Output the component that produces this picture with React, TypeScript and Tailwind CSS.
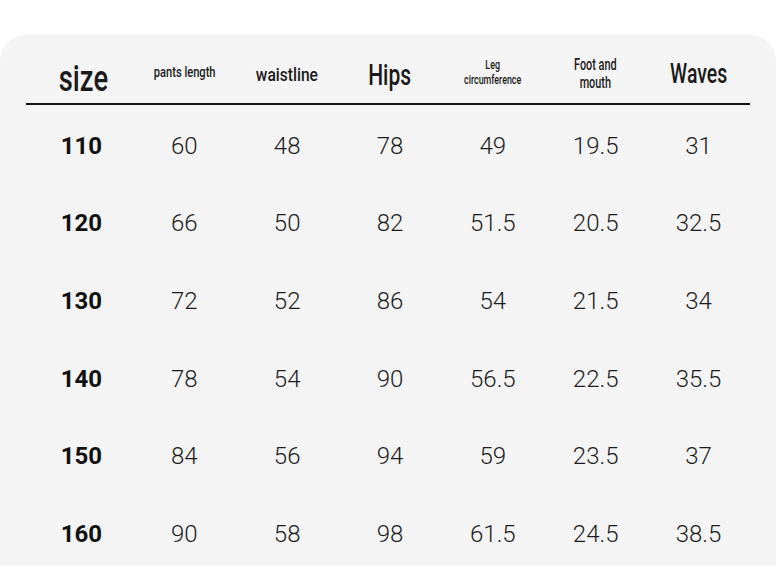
import React from "react";

const rows = [
  ["110", "60", "48", "78", "49", "19.5", "31"],
  ["120", "66", "50", "82", "51.5", "20.5", "32.5"],
  ["130", "72", "52", "86", "54", "21.5", "34"],
  ["140", "78", "54", "90", "56.5", "22.5", "35.5"],
  ["150", "84", "56", "94", "59", "23.5", "37"],
  ["160", "90", "58", "98", "61.5", "24.5", "38.5"],
];

const font = { fontFamily: "Roboto, 'Liberation Sans', sans-serif" };

export default function App() {
  return (
    <div className="w-[776px] h-[582px] bg-white pt-[34px] overflow-hidden" style={font}>
      <div className="h-[532px] bg-[#f4f4f4] rounded-t-[28px] overflow-hidden px-[26px] text-[#1a1a1a]">
        <div className="h-[71px] pt-[12px] pl-[4px] border-b-2 border-[#111] grid grid-cols-7 items-center">
          <div className="flex justify-center">
            <span className="inline-block text-[36px] leading-none font-medium scale-x-[0.76] translate-y-[4px] translate-x-[2px]">size</span>
          </div>
          <div className="flex justify-center">
            <span className="inline-block text-[15px] leading-none font-medium scale-x-[0.74] -translate-y-[2px] whitespace-nowrap">pants length</span>
          </div>
          <div className="flex justify-center">
            <span className="inline-block text-[19px] leading-none font-medium scale-x-[0.82] whitespace-nowrap">waistline</span>
          </div>
          <div className="flex justify-center">
            <span className="inline-block text-[30px] leading-none font-medium scale-x-[0.7]">Hips</span>
          </div>
          <div className="flex justify-center">
            <span className="inline-block text-[12px] leading-[15px] font-medium text-center scale-x-[0.74] -translate-y-[2px]">
              Leg
              <br />
              circumference
            </span>
          </div>
          <div className="flex justify-center">
            <span className="inline-block text-[16px] leading-[18px] font-medium text-center scale-x-[0.68] -translate-y-[1px] whitespace-nowrap">
              Foot and
              <br />
              mouth
            </span>
          </div>
          <div className="flex justify-center">
            <span className="inline-block text-[27px] leading-none font-medium scale-x-[0.72]">Waves</span>
          </div>
        </div>
        <div className="pt-[2px] pl-[4px]">
          {rows.map((r) => (
            <div key={r[0]} className="h-[77.6px] grid grid-cols-7 items-center text-[24px] leading-none text-[#1c1c1c]">
              {r.map((c, i) => (
                <div key={i} className={i === 0 ? "text-center font-bold text-[#111]" : "text-center font-[350]"}>
                  {c}
                </div>
              ))}
            </div>
          ))}
        </div>
      </div>
    </div>
  );
}
